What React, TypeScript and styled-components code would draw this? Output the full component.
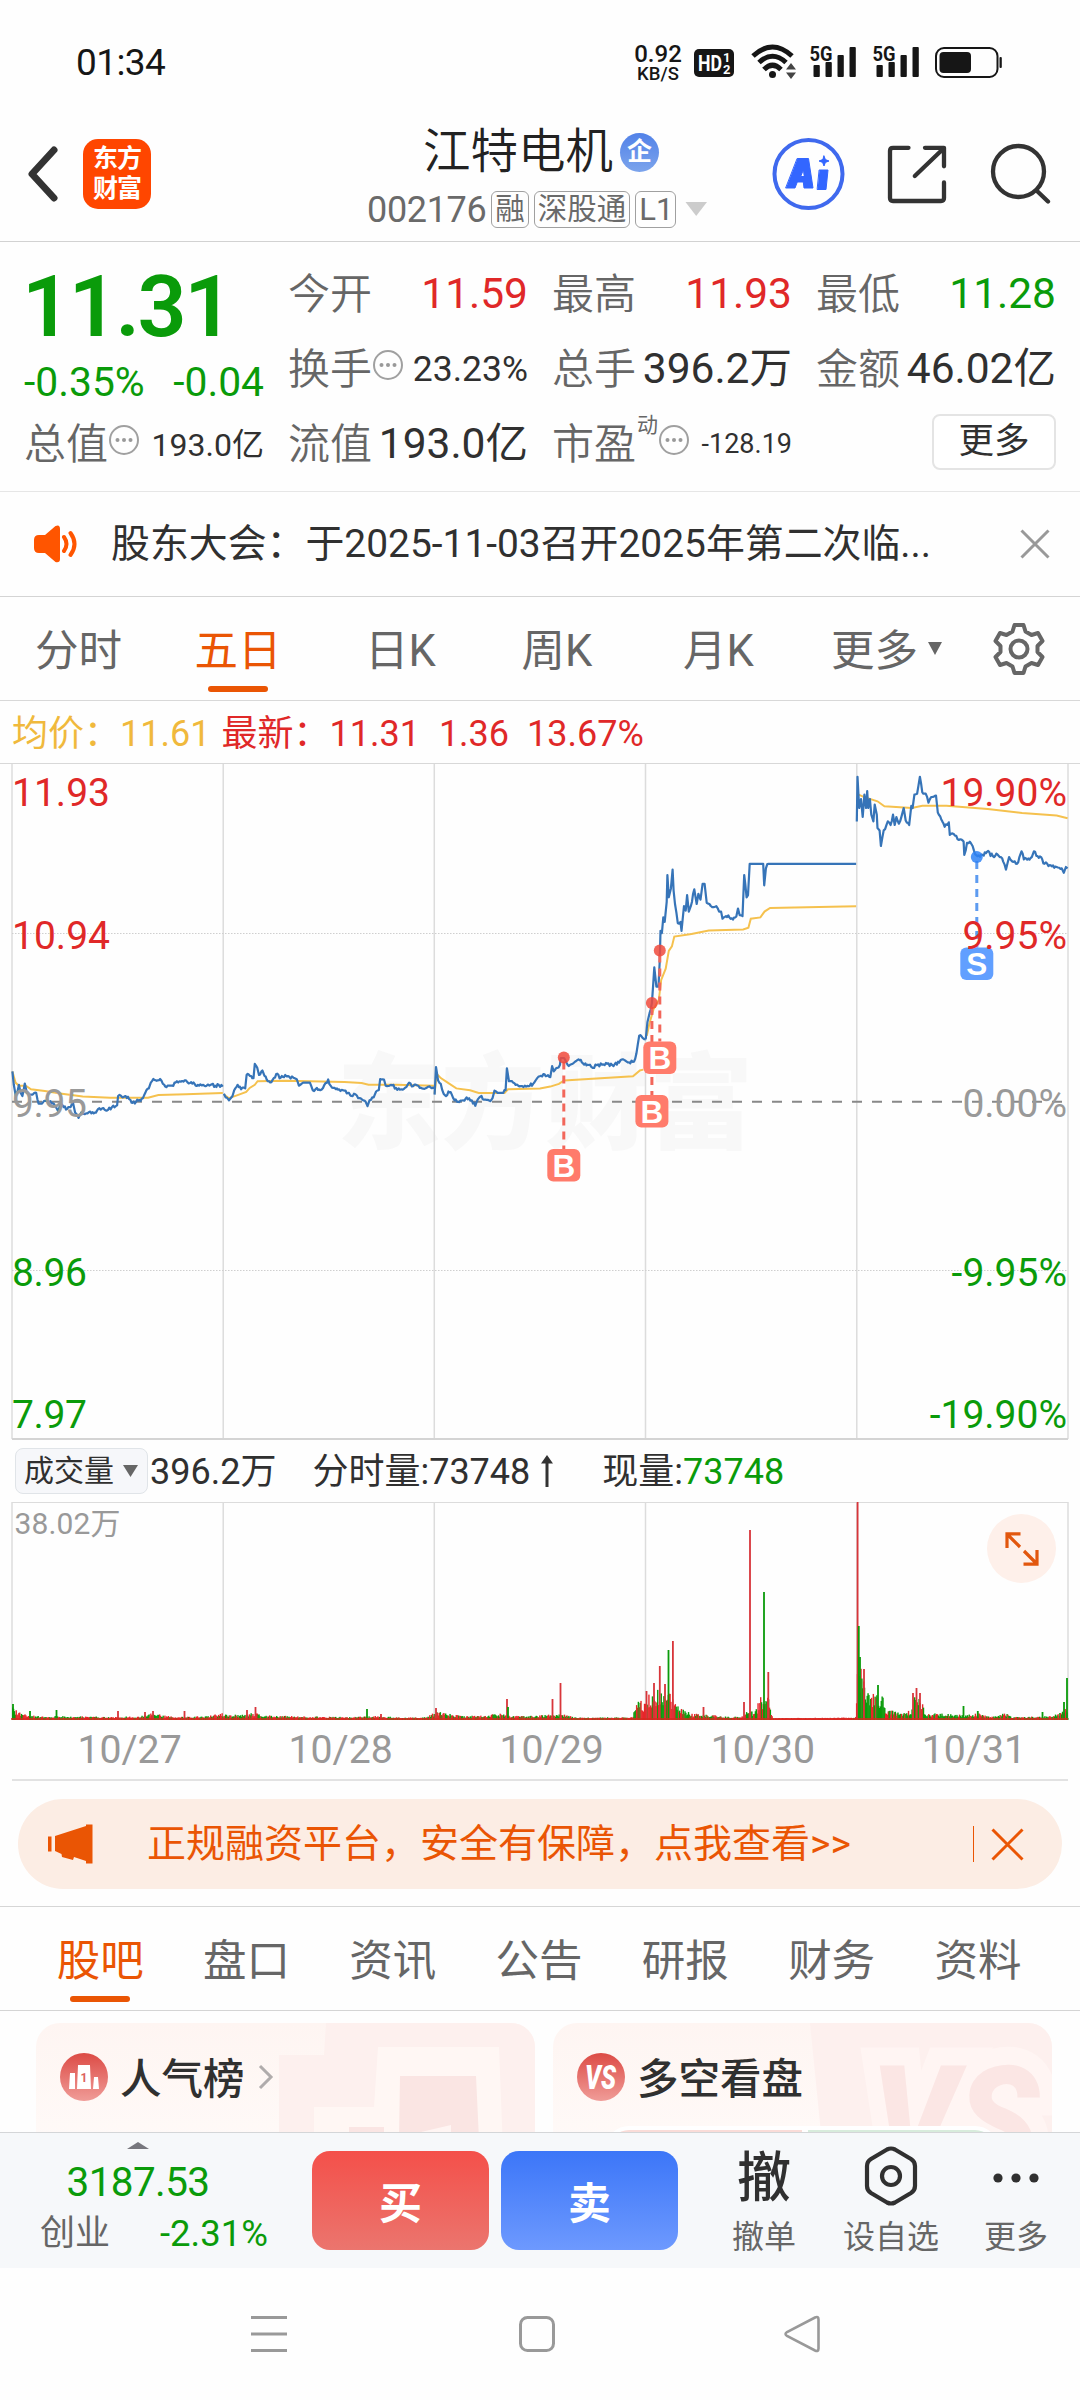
import React from "react";
import styled, { createGlobalStyle } from "styled-components";

const GREEN = "#0a9b0a";
const RED = "#e02828";
const ORANGE = "#ea5504";
const INK = "#303030";
const GREY = "#666";

const Global = createGlobalStyle`
  *, *::before, *::after { box-sizing: border-box; }
  body { margin: 0; background: #fff; }
  svg { display: block; flex: none; }
`;

const Screen = styled.div`
  width: 1080px;
  height: 2400px;
  overflow: hidden;
  background: #fefefe;
  color: ${INK};
  font-family: Roboto, "Noto Sans CJK SC", sans-serif;
  font-weight: 400;
  line-height: 1;
  white-space: nowrap;
  display: flex;
  flex-direction: column;
`;

/* ---------- status bar ---------- */
const StatusBar = styled.div`
  height: 92px;
  padding: 33px 77px 0 76px;
  display: flex;
  justify-content: space-between;
  color: #161616;
`;
const Clock = styled.div`
  font-size: 37px;
  line-height: 60px;
  letter-spacing: -0.6px;
  font-weight: 400;
`;
const StatusIcons = styled.div`
  display: flex;
  align-items: flex-start;
`;
const NetSpeed = styled.div`
  width: 50px;
  padding-top: 9px;
  margin-right: 10px;
  display: flex;
  flex-direction: column;
  align-items: center;
  font-weight: 500;
`;
const SpeedLine = styled.span<{ $size: number; $lh: number }>`
  font-size: ${(p) => p.$size}px;
  line-height: ${(p) => p.$lh}px;
`;

/* ---------- header ---------- */
const Header = styled.header`
  height: 150px;
  border-bottom: 1px solid #d2d2d2;
  display: grid;
  grid-template-columns: 367px 344px 1fr;
`;
const HeaderLeft = styled.div`
  display: flex;
  align-items: center;
  padding: 14px 0 0 26px;
  gap: 25px;
`;
const BrandTile = styled.div`
  width: 68px;
  height: 70px;
  border-radius: 15px;
  background: #ff4600;
  color: #fff;
  display: grid;
  place-content: center;
  grid-template-columns: 24px 24px;
  font-size: 25px;
  font-weight: 700;
  line-height: 30px;
`;
const HeaderCenter = styled.div`
  display: flex;
  flex-direction: column;
`;
const TitleRow = styled.div`
  height: 84px;
  padding: 36px 0 0 56px;
  display: flex;
  gap: 7px;
  align-items: center;
`;
const StockName = styled.h1`
  margin: 0;
  padding-top: 2px;
  font-size: 47.5px;
  font-weight: 350;
  color: #222;
`;
const CompanyBadge = styled.span`
  width: 39px;
  height: 39px;
  border-radius: 50%;
  background: linear-gradient(#5282e8, #7ca4ec);
  color: #fff;
  font-size: 25px;
  font-weight: 700;
  line-height: 38px;
  text-align: center;
`;
const CodeRow = styled.div`
  height: 66px;
  display: flex;
  align-items: center;
  padding-top: 0;
  gap: 5px;
  color: #6a6a6a;
`;
const Code = styled.span`
  font-size: 36px;
  letter-spacing: -0.35px;
  padding-top: 1px;
`;
const Tag = styled.span`
  height: 37px;
  padding: 0 3px;
  border: 1.5px solid #a0a0a0;
  border-radius: 6px;
  font-size: 29.5px;
  line-height: 35px;
`;
const CodeTag = styled(Tag)`
  font-size: 31px;
  padding: 0 2px 0 3px;
`;
const HeaderRight = styled.div`
  display: flex;
  align-items: center;
  justify-content: flex-end;
  padding: 14px 29px 0 0;
`;

/* ---------- quote ---------- */
const Quote = styled.section`
  height: 250px;
  border-bottom: 1px solid #e6e6e6;
  padding: 15px 24px 23px;
  display: grid;
  grid-template-columns: repeat(4, 240px);
  grid-template-rows: repeat(3, 75px);
  column-gap: 24px;
`;
const PriceBlock = styled.div`
  grid-row: span 2;
  color: ${GREEN};
`;
const Price = styled.div`
  margin-left: -2px;
  font-size: 86px;
  font-weight: 600;
  line-height: 100px;
  letter-spacing: -2.4px;
`;
const ChangeRow = styled.div`
  display: flex;
  justify-content: space-between;
  font-size: 40.8px;
  line-height: 51px;
`;
const Cell = styled.div`
  display: flex;
  align-items: center;
`;
const Label = styled.span`
  font-size: 42px;
  color: ${GREY};
  font-weight: 350;
`;
const Sup = styled.span`
  font-size: 21px;
  color: ${GREY};
  margin: -38px 0 0 1px;
`;
const Value = styled.span<{ $size?: number; $color?: string }>`
  margin-left: auto;
  font-size: ${(p) => p.$size ?? 42.5}px;
  color: ${(p) => p.$color ?? INK};
`;
const MoreButton = styled.button`
  margin: -6px 0 0 auto;
  width: 124px;
  height: 56px;
  padding: 0;
  border: 2px solid #e4e4e4;
  border-radius: 8px;
  background: #fff;
  color: ${INK};
  font: inherit;
  font-size: 35.5px;
`;

/* ---------- notice ---------- */
const Notice = styled.div`
  height: 105px;
  border-bottom: 1px solid #d4d4d4;
  padding: 0 30px 0 33px;
  display: flex;
  align-items: center;
  font-size: 38.9px;
`;
const NoticeText = styled.span`
  margin: 0 auto 0 32px;
`;

/* ---------- tabs ---------- */
const PeriodTabs = styled.nav`
  height: 104px;
  border-bottom: 1px solid #d8d8d8;
  display: grid;
  grid-template-columns: 157px 162px 163px 150px 173px 163px 101px;
  font-size: 43.5px;
`;
const SectionTabs = styled.nav`
  height: 104px;
  border-bottom: 1px solid #d4d4d4;
  padding: 0 27px;
  display: grid;
  grid-template-columns: repeat(7, 146.3px);
  font-size: 43.5px;
`;
const Tab = styled.div<{ $active?: boolean }>`
  position: relative;
  display: flex;
  align-items: center;
  justify-content: center;
  gap: 10px;
  color: ${(p) => (p.$active ? ORANGE : GREY)};
  &::after {
    content: "";
    display: ${(p) => (p.$active ? "block" : "none")};
    position: absolute;
    left: 50%;
    margin-left: -30px;
    bottom: 8px;
    width: 60px;
    height: 6px;
    border-radius: 3px;
    background: ${ORANGE};
  }
`;
const TabText = styled.span`
  padding-top: 6px;
`;

/* ---------- charts ---------- */
const Legend = styled.div`
  height: 63px;
  border-bottom: 1px solid #d8d8d8;
  padding: 3px 0 0 12px;
  display: flex;
  align-items: center;
  font-size: 36px;
`;
const LegendItem = styled.span<{ $color: string; $gap?: number }>`
  color: ${(p) => p.$color};
  margin-right: ${(p) => p.$gap ?? 0}px;
`;
const VolumeHead = styled.div`
  height: 62px;
  padding: 0 0 0 15px;
  display: flex;
  align-items: center;
  font-size: 36px;
`;
const Chip = styled.div`
  width: 133px;
  height: 46px;
  margin: -1px 2px 0 0;
  padding-left: 8px;
  border: 1px solid #e0e4e8;
  border-radius: 8px;
  background: #f6f7fa;
  display: flex;
  align-items: center;
  gap: 9px;
  font-size: 30px;
`;
const VolText = styled.span<{ $ml?: number; $color?: string }>`
  margin-left: ${(p) => p.$ml ?? 0}px;
  color: ${(p) => p.$color ?? INK};
  padding-top: 1px;
`;
const VolumeWrap = styled.div`
  position: relative;
`;
const ExpandButton = styled.div`
  position: absolute;
  top: 12px;
  left: 987px;
  width: 69px;
  height: 69px;
  border-radius: 50%;
  background: #fef0ea;
  display: grid;
  place-items: center;
`;
const Dates = styled.div`
  height: 61px;
  margin: 0 12px;
  padding: 3px 0 0 12px;
  border-bottom: 2px solid #e2e2e2;
  display: grid;
  grid-template-columns: repeat(5, 211.1px);
  align-items: center;
  text-align: center;
  font-size: 39.2px;
  color: #999;
`;

/* ---------- banner ---------- */
const BannerArea = styled.div`
  height: 126px;
  padding: 18px 18px 0;
  border-bottom: 1px solid #d6d6d6;
`;
const Banner = styled.div`
  height: 90px;
  border-radius: 45px;
  background: #fcede4;
  color: ${ORANGE};
  padding: 0 38px 0 28px;
  display: flex;
  align-items: center;
  font-size: 39px;
`;
const BannerText = styled.span`
  margin: 0 auto 0 52px;
`;
const BannerRule = styled.span`
  width: 1.5px;
  height: 36px;
  margin-right: 17px;
  background: ${ORANGE};
`;

/* ---------- cards ---------- */
const Cards = styled.div`
  height: 121px;
  padding: 12px 28px 0 36px;
  display: grid;
  grid-template-columns: 499px 499px;
  column-gap: 18px;
  overflow: hidden;
`;
const Card = styled.div`
  position: relative;
  height: 180px;
  border-radius: 24px;
  background: linear-gradient(#fef5f2, #fffaf8 70%);
  overflow: hidden;
`;
const CardArt = styled.svg`
  position: absolute;
  inset: 0;
`;
const CardHead = styled.div`
  position: relative;
  height: 108px;
  padding: 0 0 0 24px;
  display: flex;
  align-items: center;
  gap: 12px;
`;
const CardTitle = styled.span`
  padding-top: 5px;
  font-size: 41.5px;
  font-weight: 500;
`;
const Poll = styled.div`
  position: absolute;
  left: 52px;
  top: 103px;
  width: 394px;
  height: 48px;
  border: 4px solid #fff;
  border-radius: 24px;
  background: #fff;
  overflow: hidden;
  display: grid;
  grid-template-columns: 193px 1fr;
  gap: 6px;
`;
const PollSide = styled.div<{ $color: string }>`
  background: ${(p) => p.$color};
`;

/* ---------- bottom bar ---------- */
const ActionBar = styled.div`
  height: 136px;
  background: #f6f8fa;
  border-top: 1px solid #d4d6d8;
  display: flex;
`;
const IndexBox = styled.div`
  width: 276px;
  padding-top: 9px;
  display: flex;
  flex-direction: column;
  align-items: center;
  color: ${GREEN};
`;
const IndexValue = styled.div`
  font-size: 40.5px;
  line-height: 67px;
  letter-spacing: -0.6px;
`;
const IndexRow = styled.div`
  width: 228px;
  align-self: flex-start;
  margin-left: 40px;
  display: flex;
  justify-content: space-between;
  font-size: 36.5px;
  line-height: 36px;
`;
const IndexName = styled.span`
  color: ${GREY};
  font-size: 35px;
`;
const TradeButton = styled.button<{ $from: string; $to: string; $ml: number }>`
  margin: 18px 0 0 ${(p) => p.$ml}px;
  width: 177px;
  height: 99px;
  padding: 7px 0 0;
  border: 0;
  border-radius: 18px;
  background: linear-gradient(${(p) => p.$from}, ${(p) => p.$to});
  color: #fff;
  font: inherit;
  font-size: 43px;
  font-weight: 700;
`;
const Tool = styled.div<{ $w: number; $ml: number }>`
  width: ${(p) => p.$w}px;
  margin-left: ${(p) => p.$ml}px;
  display: flex;
  flex-direction: column;
  align-items: center;
`;
const ToolIcon = styled.div`
  height: 86px;
  display: flex;
  align-items: center;
`;
const CancelGlyph = styled.span`
  padding-top: 5px;
  font-size: 54px;
  font-weight: 500;
`;
const ToolLabel = styled.span`
  font-size: 32px;
  line-height: 36px;
  color: ${GREY};
`;
const SystemNav = styled.div`
  flex: 1;
  padding: 46px 258px 0 249px;
  display: flex;
  justify-content: space-between;
`;

/* ---------- chart data ---------- */
type Pt = [number, number];

const parse = (s: string): Pt[] =>
  s.trim().split(/\s+/).map((p) => p.split(",").map(Number) as Pt);

/* series are kept on a finer grid than the panel; these map it to panel pixels */
const GX = 2.9037;
const GY = 2.24;
const HALF = 1568;
const TOP = 14;

const noise = (n: number) => {
  const v = Math.sin(n * 127.1 + 11.7) * 43758.5453;
  return v - Math.floor(v);
};

const toPath = (pts: Pt[], shift: number, jitter = 0) => {
  const out: string[] = [];
  pts.forEach(([x, y], i) => {
    out.push(`${((x + shift) / GX).toFixed(1)} ${(y / GY - TOP).toFixed(1)}`);
    const next = pts[i + 1];
    if (!next || !jitter || next[1] === y) return;
    const steps = Math.floor((next[0] - x) / 3.2);
    for (let k = 1; k < steps; k++) {
      const t = k / steps;
      const jx = x + (next[0] - x) * t;
      const jy = y + (next[1] - y) * t + (noise(jx + shift) - 0.5) * jitter;
      out.push(`${((jx + shift) / GX).toFixed(1)} ${(jy / GY - TOP).toFixed(1)}`);
    }
  });
  return "M" + out.join("L");
};

const PRICE = [
  toPath(parse(`36,720 40,750 46,775 50,768 55,750 60,768 65,775 72,747 78,768 85,772 95,772 105,768 112,792 122,792 128,786 140,786 150,792 160,798 168,808 175,792 185,800 195,804 205,800 212,790 218,812 228,824 236,812 250,814 262,810 272,814 285,804 300,802 310,808 325,800 340,796 343,775 355,778 365,775 375,782 382,790 395,788 405,784 415,780 425,762 432,758 438,745 445,737 455,741 465,737 473,748 480,754 490,752 500,752 510,745 525,743 540,740 552,746 565,748 578,752 590,750 600,752 612,750 625,752 635,750 647,754`), 0, 7),
  toPath(parse(`650,770 655,778 665,785 675,775 680,762 690,750 700,760 712,758 716,728 726,730 736,735 740,703 747,712 752,728 762,718 768,730 778,742 788,744 795,735 802,726 815,734 828,728 840,732 852,734 862,738 868,752 880,745 890,745 900,745 908,762 920,757 930,762 942,750 953,738 960,752 972,757 985,760 1000,763 1010,768 1020,775 1028,770 1040,780 1055,785 1062,788 1067,798 1073,785 1085,778 1092,765 1100,762 1104,737 1115,738 1120,752 1135,750 1150,757 1165,760 1180,755 1188,745 1200,753 1215,752 1225,758 1240,756 1261,758`), 0, 7),
  toPath(parse(`1262,772 1266,710 1272,740 1280,748 1288,770 1295,775 1302,765 1312,772 1320,785 1330,788 1345,785 1355,778 1362,780 1370,785 1380,797 1388,782 1398,775 1405,783 1420,785 1430,780 1436,763 1445,768 1458,768 1468,762 1472,713 1478,742 1490,745 1505,752 1520,755 1535,753 1548,748 1560,735 1578,726 1588,730 1598,733 1603,708 1608,720 1618,712 1626,705 1628,690 1638,690 1648,705 1663,703 1683,695 1693,702 1713,705 1721,712 1733,706 1748,705 1763,703 1778,706 1798,700 1810,693 1823,700 1841,698 1848,680 1856,640 1866,645 1875,648`), 0, 7),
  toPath(parse(`307,648 312,610 318,590 325,567 332,487 338,530 344,530 348,470 350,405 354,410 358,375 362,385 368,340 370,280 374,330 380,310 385,268 388,315 392,345 400,388 408,385 411,405 418,350 423,360 427,325 432,362 438,350 448,312 455,345 460,322 466,335 472,300 478,300 484,342 492,345 500,352 512,350 520,362 526,362 530,378 540,372 550,375 560,380 570,373 575,355 580,370 588,372 593,280 600,330 604,325 609,255 648,255 651,303 656,265 664,255 918,255`), HALF, 9),
  toPath(parse(`920,160 922,60 927,130 932,110 937,150 942,100 947,130 950,92 953,130 958,110 962,145 968,160 972,122 978,145 980,175 986,180 990,215 998,180 1010,160 1018,168 1025,145 1030,168 1035,150 1042,165 1050,148 1056,130 1062,158 1072,168 1078,125 1082,130 1087,100 1095,98 1103,60 1110,95 1120,98 1128,118 1140,105 1150,102 1155,140 1165,155 1175,172 1187,162 1190,190 1205,192 1220,200 1230,205 1232,235 1240,208 1252,210 1260,225 1270,238 1285,235 1298,228 1315,238 1325,232 1335,240 1345,250 1353,268 1362,240 1372,250 1385,255 1392,240 1398,227 1405,245 1418,243 1428,240 1434,227 1445,238 1455,240 1465,255 1480,258 1500,262 1515,265 1521,275 1527,262 1532,265`), HALF, 9),
];

const AVERAGE = [
  toPath(parse(`36,720 45,745 55,752 75,752 90,760 130,764 180,770 240,776 320,779 430,779 460,773 540,771 647,768`), 0),
  toPath(parse(`650,772 665,780 690,773 715,766 725,757 740,750 748,742 830,741 900,742 1000,744 1050,746 1070,750 1150,750 1261,752`), 0),
  toPath(parse(`1262,770 1268,725 1280,735 1300,745 1325,758 1365,762 1390,768 1465,768 1475,760 1568,758 1598,754 1623,748 1638,740 1838,731 1858,718 1868,716`), 0),
  toPath(parse(`310,640 318,612 330,580 345,560 352,515 365,490 374,450 383,440 390,418 440,412 490,404 590,402 605,398 612,378 640,375 652,362 668,354 918,350`), HALF),
  toPath(parse(`925,100 940,105 980,115 1000,126 1080,130 1110,125 1180,125 1300,132 1400,141 1500,147 1532,153`), HALF),
];

const COLUMNS = [12, 223.2, 434.3, 645.5, 856.8, 1068];

const LEVELS: [number, string, string, string][] = [
  [42, "11.93", "19.90%", RED],
  [185, "10.94", "9.95%", RED],
  [353, "9.95", "0.00%", "#999"],
  [522, "8.96", "-9.95%", GREEN],
  [664, "7.97", "-19.90%", GREEN],
];

const TRADES: { x: number; y: number; box: number; kind: "B" | "S" }[] = [
  { x: 563.8, y: 293.6, box: 385, kind: "B" },
  { x: 651.9, y: 239, box: 331, kind: "B" },
  { x: 659.8, y: 186.4, box: 277.5, kind: "B" },
  { x: 976.8, y: 93, box: 183.5, kind: "S" },
];

/* height envelope of the per-minute volume, in panel pixels */
const ENVELOPE: Pt[] = [
  [12, 15], [16, 8], [22, 5], [30, 4], [36, 3], [50, 3], [80, 3], [110, 2], [140, 3], [152, 7], [162, 4], [175, 2],
  [205, 3], [222, 6], [232, 4], [246, 6], [255, 7], [262, 4], [290, 3], [350, 2], [370, 3], [380, 3], [400, 1.5], [425, 2],
  [436, 8], [450, 5], [465, 3], [505, 6], [510, 3], [540, 4], [553, 5], [563, 5], [575, 1.5], [632, 2], [635, 20], [640, 22],
  [643, 12], [646, 26], [655, 26], [659, 36], [667, 30], [673, 18], [680, 13], [690, 6], [705, 5], [730, 2], [743, 3],
  [748, 10], [754, 6], [760, 24], [768, 24], [772, 1], [855, 1.5], [857, 74], [861, 52], [865, 36], [872, 26], [882, 24],
  [886, 10], [900, 7], [910, 9], [914, 24], [920, 20], [926, 5], [940, 6], [965, 4], [978, 6], [990, 2], [1004, 7], [1012, 2],
  [1050, 3], [1058, 6], [1067, 12],
];

/* single minutes that stand out: x, height, rising */
const SPIKES: [number, number, boolean][] = [
  [13, 16, false], [30, 9, false], [56.5, 10, false], [118, 9, true], [145, 8, true], [153, 9, true], [184.5, 9, true],
  [247, 10, true], [255.5, 13, true], [367, 11, false], [381, 6, true], [436, 12, true], [507, 21, true], [508, 13, false],
  [552.5, 21, true], [560.5, 37, true], [646.5, 29, true], [654, 37, true], [659.8, 54, true], [665, 36, true],
  [668.5, 70, false], [672.9, 79, true], [703.5, 13, true], [744, 18, true], [750, 190, true], [764, 128, false],
  [768.3, 48, true], [857.6, 218, true], [858.8, 94, false], [860, 63, false], [864, 51, true], [878, 35, false], [913, 27, true],
  [916.5, 32, true], [920, 27, true], [963.5, 14, false], [977.8, 9, false], [1042.5, 8, false], [1064, 18, false], [1067, 42, false],
];

const envelopeAt = (x: number) => {
  for (let i = 1; i < ENVELOPE.length; i++) {
    const [x1, y1] = ENVELOPE[i];
    const [x0, y0] = ENVELOPE[i - 1];
    if (x <= x1) return y0 + ((y1 - y0) * (x - x0)) / (x1 - x0);
  }
  return 2;
};

const BARS = Array.from({ length: 1200 }, (_, i) => {
  const x = 12 + i * 0.88;
  const h = 1 + envelopeAt(x) * (0.4 + 0.6 * Math.pow(noise(i), 1.4));
  const flat = x > 774 && x < 850;
  const selling = x > 858;
  return { x, h, up: flat || noise(i + 5000) > (selling ? 0.6 : 0.45) };
});

/* ---------- icons ---------- */
const Dots = () => (
  <svg width="32" height="32" viewBox="0 0 32 32" style={{ marginTop: -10 }}>
    <circle cx="16" cy="16" r="14" fill="none" stroke="#a0a0a0" strokeWidth="2" />
    {[9.5, 16, 22.5].map((x) => (
      <circle key={x} cx={x} cy="16" r="2" fill="#999" />
    ))}
  </svg>
);

const Cross = ({ size, color, width }: { size: number; color: string; width: number }) => (
  <svg width={size} height={size} viewBox={`0 0 ${size} ${size}`}>
    <path d={`M1.5 1.5L${size - 1.5} ${size - 1.5}M${size - 1.5} 1.5L1.5 ${size - 1.5}`} stroke={color} strokeWidth={width} />
  </svg>
);

const StatusGlyphs = () => (
  <svg width="310" height="60" viewBox="694 33 310 60" fill="#161616">
    <rect x="695" y="49" width="40" height="28" rx="5" />
    <g fill="#fff" fontFamily="Roboto, sans-serif" fontWeight="700">
      <text x="699" y="71" fontSize="22" textLength="24" lengthAdjust="spacingAndGlyphs">HD</text>
      <text x="724" y="62" fontSize="13">1</text>
      <text x="724" y="74" fontSize="13">2</text>
    </g>
    <g fill="none" stroke="#161616" strokeWidth="5">
      <path d="M754 56Q773.500 38 793 56" />
      <path d="M760 62.500Q773.500 50 787 62.500" />
      <path d="M765 69.500Q773.500 61 782 69.500" />
    </g>
    <circle cx="773.500" cy="74.500" r="3.500" />
    <path d="M787 69.500l5-6.500 5 6.500zM787 72.500l5 6.500 5-6.500z" fill="#444" />
    {[0, 63].map((dx) => (
      <g key={dx} transform={`translate(${dx} 0)`}>
        <text x="810.500" y="60.500" fontFamily="Roboto, sans-serif" fontSize="21" fontWeight="700" textLength="23" lengthAdjust="spacingAndGlyphs">5G</text>
        <rect x="814.500" y="65" width="6.300" height="12" rx="1" />
        <rect x="826.500" y="62" width="6.300" height="15" rx="1" />
        <rect x="838.500" y="55" width="6.300" height="22" rx="1" />
        <rect x="850.500" y="47" width="6.300" height="30" rx="1" />
      </g>
    ))}
    <rect x="937" y="48" width="61.500" height="29" rx="8" fill="none" stroke="#161616" strokeWidth="2" />
    <rect x="940.500" y="52" width="31.500" height="21" rx="4" />
    <rect x="1000.500" y="57" width="2.300" height="11" rx="1" />
  </svg>
);

const App = () => (
  <>
    <Global />
    <Screen lang="zh-CN">
      <StatusBar>
        <Clock>01:34</Clock>
        <StatusIcons>
          <NetSpeed>
            <SpeedLine $size={24} $lh={25}>0.92</SpeedLine>
            <SpeedLine $size={18.5} $lh={15}>KB/S</SpeedLine>
          </NetSpeed>
          <StatusGlyphs />
        </StatusIcons>
      </StatusBar>

      <Header>
        <HeaderLeft>
          <svg width="32" height="58" viewBox="0 0 32 58">
            <path d="M28 5L6 29L28 53" fill="none" stroke="#333" strokeWidth="7" strokeLinecap="round" strokeLinejoin="round" />
          </svg>
          <BrandTile>
            <span>东</span>
            <span>方</span>
            <span>财</span>
            <span>富</span>
          </BrandTile>
        </HeaderLeft>
        <HeaderCenter>
          <TitleRow>
            <StockName>江特电机</StockName>
            <CompanyBadge>企</CompanyBadge>
          </TitleRow>
          <CodeRow>
            <Code>002176</Code>
            <Tag>融</Tag>
            <Tag>深股通</Tag>
            <CodeTag>L1</CodeTag>
            <svg width="30" height="14" viewBox="0 0 30 14">
              <path d="M4.500 0H26L15.200 14z" fill="#ccc" />
            </svg>
          </CodeRow>
        </HeaderCenter>
        <HeaderRight>
          <svg width="280" height="76" viewBox="771 136 280 76" fill="none" strokeLinecap="round" strokeLinejoin="round">
            <circle cx="808.500" cy="174" r="34" stroke="#3f69ee" strokeWidth="4" />
            <g fill="#3366ff" stroke="#3366ff">
              <path d="M797.500 158.500h11l4.500 29.500h-9l-.7-6h-6l-2.300 6h-9zM803.300 170l-2.600 6.500h3.300z" fillRule="evenodd" />
              <path d="M819.500 170h8.500l-2 19.500h-8.500z" />
              <path d="M824 156l1.400 3.600 3.600 1.400-3.600 1.400-1.400 3.600-1.400-3.600-3.600-1.400 3.600-1.400z" />
            </g>
            <g stroke="#333" strokeWidth="4.300">
              <path d="M908.500 147.800H893q-3 0-3 3V198q0 3 3 3h48q3 0 3-3V182.500" />
              <path d="M925 147.800h19v18.500M943 149L914.800 176" />
              <circle cx="1018.500" cy="171.500" r="25.500" />
              <path d="M1036.500 190.500l11.500 11" />
            </g>
          </svg>
        </HeaderRight>
      </Header>

      <Quote>
        <PriceBlock>
          <Price>11.31</Price>
          <ChangeRow>
            <span>-0.35%</span>
            <span>-0.04</span>
          </ChangeRow>
        </PriceBlock>
        <Cell><Label>今开</Label><Value $color={RED}>11.59</Value></Cell>
        <Cell><Label>最高</Label><Value $color={RED}>11.93</Value></Cell>
        <Cell><Label>最低</Label><Value $color={GREEN}>11.28</Value></Cell>
        <Cell><Label>换手</Label><Dots /><Value $size={35.5}>23.23%</Value></Cell>
        <Cell><Label>总手</Label><Value>396.2万</Value></Cell>
        <Cell><Label>金额</Label><Value>46.02亿</Value></Cell>
        <Cell><Label>总值</Label><Dots /><Value $size={32}>193.0亿</Value></Cell>
        <Cell><Label>流值</Label><Value>193.0亿</Value></Cell>
        <Cell><Label>市盈</Label><Sup>动</Sup><Dots /><Value $size={27}>-128.19</Value></Cell>
        <Cell><MoreButton>更多</MoreButton></Cell>
      </Quote>

      <Notice>
        <svg width="46" height="38" viewBox="0 0 46 38" fill="#ff5500">
          <path d="M6 10h6l10.500-9Q27 -1 27 4v30q0 4-4.500 3L12 28H6q-5 0-5-5v-8q0-5 5-5z" />
          <path d="M31 12q5 7 0 14M37.500 8q8 11 0 22" fill="none" stroke="#ff5500" strokeWidth="4" strokeLinecap="round" />
        </svg>
        <NoticeText>股东大会：于2025-11-03召开2025年第二次临...</NoticeText>
        <Cross size={30} color="#999" width={3} />
      </Notice>

      <PeriodTabs>
        <Tab><TabText>分时</TabText></Tab>
        <Tab $active><TabText>五日</TabText></Tab>
        <Tab><TabText>日K</TabText></Tab>
        <Tab><TabText>周K</TabText></Tab>
        <Tab><TabText>月K</TabText></Tab>
        <Tab>
          <TabText>更多</TabText>
          <svg width="14" height="13" viewBox="0 0 14 13"><path d="M0 0h14L7 13z" fill="#666" /></svg>
        </Tab>
        <Tab>
          <svg width="54" height="54" viewBox="0 0 54 54" fill="none" stroke="#666" strokeWidth="4" strokeLinejoin="round">
            <path d="M22.500 3h9l2 6.500 6 3.500 6.500-2 4.500 8-5 5v6l5 5-4.500 8-6.500-2-6 3.500-2 6.500h-9l-2-6.500-6-3.500-6.500 2-4.500-8 5-5v-6l-5-5 4.500-8 6.500 2 6-3.500z" />
            <circle cx="27" cy="27" r="8.500" />
          </svg>
        </Tab>
      </PeriodTabs>

      <Legend>
        <LegendItem $color="#f0b93c">均价：</LegendItem>
        <LegendItem $color="#f0b93c" $gap={11}>11.61</LegendItem>
        <LegendItem $color={RED}>最新：</LegendItem>
        <LegendItem $color={RED} $gap={19}>11.31</LegendItem>
        <LegendItem $color={RED} $gap={18}>1.36</LegendItem>
        <LegendItem $color={RED}>13.67%</LegendItem>
      </Legend>

      <svg width="1080" height="676" viewBox="0 0 1080 676" fontFamily="Roboto, 'Noto Sans CJK SC', sans-serif">
        <text x="337" y="377" fontSize="104" fontWeight="900" fill="#f8f8f8">东方财富</text>
        {COLUMNS.map((x) => (
          <line key={x} x1={x} x2={x} y1="0" y2="675" stroke="#dcdcdc" strokeWidth="1.500" />
        ))}
        <line x1="12" x2="1068" y1="675" y2="675" stroke="#d4d4d4" strokeWidth="2" />
        {[169.5, 506.5].map((y) => (
          <line key={y} x1="12" x2="1068" y1={y} y2={y} stroke="#cfcfcf" strokeDasharray="1.500 1.500" />
        ))}
        <line x1="12" x2="1068" y1="337.700" y2="337.700" stroke="#888" strokeWidth="2" strokeDasharray="10 10" />
        {AVERAGE.map((d) => <path key={d} d={d} fill="none" stroke="#f5c14e" strokeWidth="2" />)}
        {PRICE.map((d) => <path key={d} d={d} fill="none" stroke="#3674b8" strokeWidth="2.200" strokeLinejoin="round" />)}
        {TRADES.map(({ x, y, box, kind }) => {
          const buy = kind === "B";
          return (
            <g key={x}>
              <line x1={x} x2={x} y1={y + 4} y2={box} stroke={buy ? "#f2665a" : "#5d9bf0"} strokeWidth="3" strokeDasharray="8 6" />
              <circle cx={x} cy={y} r="6" fill={buy ? "#f04a3c" : "#2f82f5"} fillOpacity="0.850" />
              <rect x={x - 16.5} y={box} width="33" height="32.500" rx="6" fill={buy ? "#ff7b6b" : "#619fff"} />
              <text x={x} y={box + 27.5} textAnchor="middle" fontFamily="Liberation Sans, sans-serif" fontWeight="700" fontSize="31.500" fill="#fff">{kind}</text>
            </g>
          );
        })}
        {LEVELS.map(([y, price, pct, color]) => (
          <g key={y} fill={color} fontSize="39">
            <text x="12" y={y} textLength={price.length === 5 ? 98 : 75}>{price}</text>
            <text x="1067" y={y} textAnchor="end">{pct}</text>
          </g>
        ))}
      </svg>

      <VolumeHead>
        <Chip>
          成交量
          <svg width="15" height="12" viewBox="0 0 15 12"><path d="M0 0h15L7.500 12z" fill="#666" /></svg>
        </Chip>
        <VolText>396.2万</VolText>
        <VolText $ml={36}>分时量:73748</VolText>
        <svg width="12" height="32" viewBox="0 0 12 32" style={{ marginLeft: 11 }}>
          <path d="M0 8.500L6 0l6 8.500H7.500V32h-3V8.500z" fill="#333" />
        </svg>
        <VolText $ml={49}>现量:</VolText>
        <VolText $color={GREEN}>73748</VolText>
      </VolumeHead>

      <VolumeWrap>
        <svg width="1080" height="218" viewBox="0 0 1080 218" fontFamily="Roboto, 'Noto Sans CJK SC', sans-serif">
          <line x1="12" x2="1068" y1="0.500" y2="0.500" stroke="#dcdcdc" />
          {COLUMNS.map((x) => (
            <line key={x} x1={x} x2={x} y1="0" y2="217" stroke="#dcdcdc" strokeWidth="1.500" />
          ))}
          <text x="14.500" y="32" fontSize="30" fill="#999" textLength="106">38.02万</text>
          {BARS.map(({ x, h, up }) => (
            <rect key={x} x={x} y={218 - h} width="1.400" height={h} fill={up ? "#e8262a" : GREEN} />
          ))}
          {SPIKES.map(([x, h, up]) => (
            <rect key={x} x={x - 0.9} y={218 - h} width="1.800" height={h} fill={up ? "#d8353a" : GREEN} />
          ))}
          <line x1="11" x2="1068" y1="217" y2="217" stroke="#d62a20" strokeWidth="1.500" />
        </svg>
        <ExpandButton>
          <svg width="34" height="34" viewBox="0 0 34 34" fill="none" stroke="#e2570e" strokeWidth="3.200">
            <path d="M15.500 1.800H2V16M2 2l13 13M18.500 32.200H32V18M32 32L19 19" />
          </svg>
        </ExpandButton>
      </VolumeWrap>
      <Dates>
        <span>10/27</span>
        <span>10/28</span>
        <span>10/29</span>
        <span>10/30</span>
        <span>10/31</span>
      </Dates>

      <BannerArea>
        <Banner>
          <svg width="49" height="40" viewBox="0 0 49 40" fill={ORANGE}>
            <path d="M2 12.500h3.500v15H2zM9 12L40 2V0.500h6.500v39H40V37l-12-4-1 3-11-3-.5-3L9 27z" />
          </svg>
          <BannerText>正规融资平台，安全有保障，点我查看&gt;&gt;</BannerText>
          <BannerRule />
          <Cross size={33} color={ORANGE} width={3} />
        </Banner>
      </BannerArea>

      <SectionTabs>
        <Tab $active><TabText>股吧</TabText></Tab>
        <Tab><TabText>盘口</TabText></Tab>
        <Tab><TabText>资讯</TabText></Tab>
        <Tab><TabText>公告</TabText></Tab>
        <Tab><TabText>研报</TabText></Tab>
        <Tab><TabText>财务</TabText></Tab>
        <Tab><TabText>资料</TabText></Tab>
      </SectionTabs>

      <Cards>
        <Card>
          <CardArt width="499" height="180" viewBox="0 0 499 180">
            <path d="M290 0H499V180H243V32h45z" fill="#fdf0ee" />
            <path d="M342 24H463l6 156H278V84h60z" fill="#fff7f4" />
            <path d="M364 53h76l6 127h-84zM313 104h35v76h-35z" fill="#fae5e3" />
            <path d="M385 109l30-7v78h-18v-60l-12 2z" fill="#fff5f3" />
          </CardArt>
          <CardHead>
            <svg width="48" height="48" viewBox="0 0 48 48">
              <defs>
                <linearGradient id="disc" x2="0" y2="1"><stop stopColor="#dc4b45" /><stop offset="1" stopColor="#f09c98" /></linearGradient>
              </defs>
              <circle cx="24" cy="24" r="24" fill="url(#disc)" />
              <path d="M10 20h5v16H9zM18 12h12l1 24H17zM34 24h4l1 12h-6z" fill="#fff" />
              <text x="20.500" y="29" fontFamily="Roboto, sans-serif" fontSize="12" fontWeight="700" fill="#dd625d">1</text>
            </svg>
            <CardTitle>人气榜</CardTitle>
            <svg width="16" height="26" viewBox="0 0 16 26" style={{ marginLeft: 1 }}>
              <path d="M2 2l11 11L2 24" fill="none" stroke="#b0acac" strokeWidth="3" />
            </svg>
          </CardHead>
        </Card>
        <Card>
          <CardArt width="499" height="180" viewBox="0 0 499 180">
            <path d="M257 0H499V180H275z" fill="#fdf0ee" />
            <text x="318" y="148" fontFamily="Roboto, sans-serif" fontSize="148" fontWeight="900" fontStyle="italic" fill="#fbe6e4" stroke="#fff5f3" strokeWidth="36" paintOrder="stroke" strokeLinejoin="miter" textLength="168" lengthAdjust="spacingAndGlyphs">VS</text>
          </CardArt>
          <CardHead>
            <svg width="48" height="48" viewBox="0 0 48 48">
              <circle cx="24" cy="24" r="24" fill="url(#disc)" />
              <text x="23.500" y="36" textAnchor="middle" fontFamily="Roboto, sans-serif" fontSize="33" fontWeight="900" fontStyle="italic" fill="#fff" textLength="31" lengthAdjust="spacingAndGlyphs">VS</text>
            </svg>
            <CardTitle>多空看盘</CardTitle>
          </CardHead>
          <Poll>
            <PollSide $color="#fadcd8" />
            <PollSide $color="#d8ecdc" />
          </Poll>
        </Card>
      </Cards>

      <ActionBar>
        <IndexBox>
          <svg width="22" height="7" viewBox="0 0 22 7"><path d="M11 0L22 7H0z" fill="#77777d" /></svg>
          <IndexValue>3187.53</IndexValue>
          <IndexRow>
            <IndexName>创业</IndexName>
            <span>-2.31%</span>
          </IndexRow>
        </IndexBox>
        <TradeButton $ml={36} $from="#f4504a" $to="#eb756e">买</TradeButton>
        <TradeButton $ml={12} $from="#3c76f8" $to="#6d99fe">卖</TradeButton>
        <Tool $w={100} $ml={36}>
          <ToolIcon><CancelGlyph>撤</CancelGlyph></ToolIcon>
          <ToolLabel>撤单</ToolLabel>
        </Tool>
        <Tool $w={110} $ml={22}>
          <ToolIcon>
            <svg width="54" height="60" viewBox="0 0 54 60" fill="none" stroke="#303030" strokeWidth="4.200">
              <path d="M23 3.500q4-2 8 0l16 9.500q4 2.500 4 7v20q0 4.500-4 7l-16 9.500q-4 2-8 0L7 47q-4-2.500-4-7V20q0-4.500 4-7z" />
              <circle cx="27" cy="30" r="9" />
            </svg>
          </ToolIcon>
          <ToolLabel>设自选</ToolLabel>
        </Tool>
        <Tool $w={90} $ml={25}>
          <ToolIcon>
            <svg width="46" height="10" viewBox="0 0 46 10" fill="#303030" style={{ marginTop: 3 }}>
              <circle cx="5" cy="5" r="4.600" />
              <circle cx="23" cy="5" r="4.600" />
              <circle cx="41" cy="5" r="4.600" />
            </svg>
          </ToolIcon>
          <ToolLabel>更多</ToolLabel>
        </Tool>
      </ActionBar>

      <SystemNav>
        <svg width="40" height="40" viewBox="0 0 40 40"><path d="M2 3.500h36M2 20h36M2 36.500h36" stroke="#999" strokeWidth="3" /></svg>
        <svg width="40" height="40" viewBox="-1 0 40 40"><rect x="3.500" y="3.500" width="33" height="33" rx="7" fill="none" stroke="#999" strokeWidth="3" /></svg>
        <svg width="40" height="40" viewBox="0 0 40 40">
          <path d="M33 3.500q3.500-1.500 3.500 2v29q0 3.500-3.500 2L5 22q-3-2 0-4z" fill="none" stroke="#999" strokeWidth="2.600" />
        </svg>
      </SystemNav>
    </Screen>
  </>
);

export default App;
